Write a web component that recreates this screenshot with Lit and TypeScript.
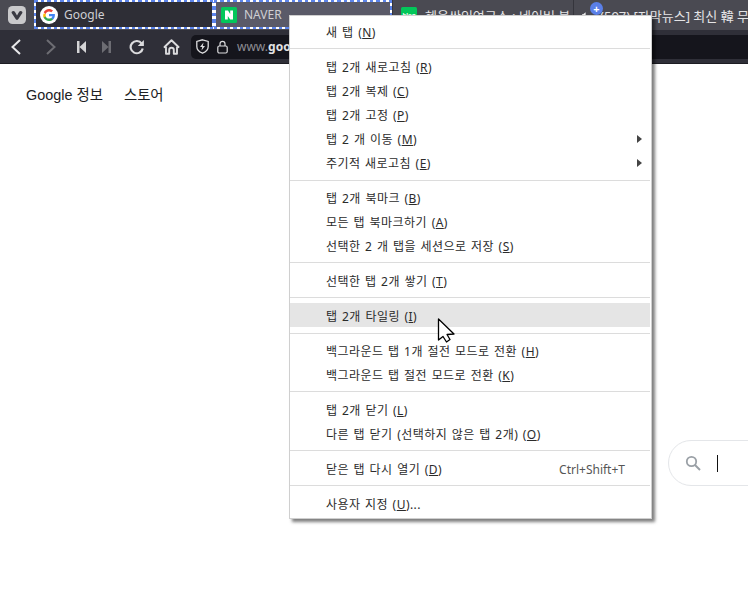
import { LitElement, html, css, svg } from "lit";
import { customElement } from "lit/decorators.js";

type Row = { t: string; k: string; post?: string; arrow?: boolean; hover?: boolean; sc?: string };
type Sep = { sep: "" | "mid" | "before" | "after" };
type Item = Row | Sep;

const ITEMS: Item[] = [
  { t: "새 탭", k: "N" }, { sep: "" },
  { t: "탭 2개 새로고침", k: "R" },
  { t: "탭 2개 복제", k: "C" },
  { t: "탭 2개 고정", k: "P" },
  { t: "탭 2 개 이동", k: "M", arrow: true },
  { t: "주기적 새로고침", k: "E", arrow: true }, { sep: "mid" },
  { t: "탭 2개 북마크", k: "B" },
  { t: "모든 탭 북마크하기", k: "A" },
  { t: "선택한 2 개 탭을 세션으로 저장", k: "S" }, { sep: "" },
  { t: "선택한 탭 2개 쌓기", k: "T" }, { sep: "before" },
  { t: "탭 2개 타일링", k: "I", hover: true }, { sep: "after" },
  { t: "백그라운드 탭 1개 절전 모드로 전환", k: "H" },
  { t: "백그라운드 탭 절전 모드로 전환", k: "K" }, { sep: "" },
  { t: "탭 2개 닫기", k: "L" },
  { t: "다른 탭 닫기 (선택하지 않은 탭 2개)", k: "O" }, { sep: "" },
  { t: "닫은 탭 다시 열기", k: "D", sc: "Ctrl+Shift+T" }, { sep: "" },
  { t: "사용자 지정", k: "U", post: "..." },
];

@customElement("app-root")
export class AppRoot extends LitElement {
  static styles = css`
    :host {
      display: block;
      position: relative;
      width: 748px;
      height: 603px;
      overflow: hidden;
      background: #fff;
      font-family: "Noto Sans", "Noto Sans CJK KR", sans-serif;
    }
    .tabbar {
      height: 30px;
      background: #4a4a52;
      display: flex;
      align-items: stretch;
      overflow: hidden;
    }
    .vlogo {
      width: 34px;
      flex: none;
      display: flex;
      justify-content: center;
      padding: 6px 0 0 0;
      box-sizing: border-box;
    }
    .vlogo svg { display: block; }
    .sel {
      --dash: #5c84ea 0 3.5px, #fff 3.5px 6.5px;
      box-sizing: border-box;
      height: 29px;
      width: 180px;
      flex: none;
      padding: 2px;
      background-color: #fff;
      background-image:
        repeating-linear-gradient(90deg, var(--dash)),
        repeating-linear-gradient(90deg, var(--dash)),
        repeating-linear-gradient(180deg, var(--dash)),
        repeating-linear-gradient(180deg, var(--dash));
      background-size: 100% 2px, 100% 2px, 2px 100%, 2px 100%;
      background-position: 0 0, 0 100%, 0 0, 100% 0;
      background-repeat: no-repeat;
    }
    .tabin {
      height: 100%;
      display: flex;
      align-items: center;
      gap: 6px;
      padding: 0 0 0 4px;
      font-size: 12px;
      color: #cfcfd3;
      box-sizing: border-box;
    }
    .sel.a .tabin { background: #2e2e36; }
    .sel.b .tabin { background: #5a5a68; padding-left: 5px; gap: 7px; }
    .sel.b { width: 178px; }
    .plain {
      flex: none;
      display: flex;
      align-items: center;
      box-sizing: border-box;
      color: #e4e4e6;
      font-size: 13px;
      white-space: nowrap;
      overflow: hidden;
      border-left: 1px solid #35353c;
      position: relative;
    }
    .plain.t3 { width: 181px; padding-left: 8px; gap: 8px; }
    .plain.t4 { width: 176px; padding-left: 8px; }
    .t4 .title { margin-left: 14px; }
    .badge {
      position: absolute;
      left: 16px;
      top: 2px;
      width: 13px;
      height: 13px;
      border-radius: 50%;
      background: #5a7fe8;
      color: #fff;
      font-size: 11px;
      line-height: 13px;
      text-align: center;
      font-weight: 700;
    }
    .toolbar {
      height: 34px;
      background: #2f2f38;
      display: flex;
      align-items: center;
      border-bottom: 1px solid #1c1c22;
      box-sizing: border-box;
    }
    .toolbar svg { display: block; flex: none; }
    .i-back { margin-left: 9px; }
    .i-fwd { margin-left: 21px; }
    .i-rew { margin-left: 19px; }
    .i-ff { margin-left: 16px; }
    .i-reload { margin-left: 18px; }
    .i-home { margin-left: 18px; }
    .i-lock { margin-left: 8px; }
    .addr {
      margin-left: 11px;
      flex: 1;
      height: 24px;
      background: #15151c;
      border-radius: 5px 0 0 5px;
      display: flex;
      align-items: center;
      padding-left: 5px;
      color: #8e8e94;
      font-size: 12px;
      box-sizing: border-box;
    }
    .addr b { color: #e2e2e4; font-weight: 700; }
    .addr .url { margin-left: 9px; }
    .links {
      display: flex;
      gap: 21px;
      padding: 22px 0 0 26px;
      font-family: "Liberation Sans", "Noto Sans CJK KR", sans-serif;
      font-size: 14.4px;
      line-height: 18px;
      color: #202124;
    }
    .search {
      margin: 336px 0 0 668px;
      width: 120px;
      height: 46px;
      box-sizing: border-box;
      border: 1px solid #e4e6e9;
      border-radius: 23px;
      display: flex;
      align-items: center;
      padding-left: 16px;
    }
    .caret { width: 1px; height: 17px; background: #111; margin-left: 16px; }
    .menu {
      position: absolute;
      left: 289px;
      top: 15px;
      width: 363px;
      box-sizing: border-box;
      background: #fff;
      border: 1px solid #cfcfcf;
      box-shadow: 3px 3px 3px rgba(0, 0, 0, 0.5);
      padding: 4px 1px 2px 0;
      font-size: 12px;
      color: #2b2b2b;
    }
    .row {
      box-sizing: border-box;
      height: 24px;
      display: flex;
      align-items: center;
      padding-left: 36px;
      padding-right: 25px;
      position: relative;
      white-space: nowrap;
      letter-spacing: 0.45px;
      word-spacing: 1px;
    }
    .row.hover { background: #e5e5e5; padding-top: 2px; }
    .row u { text-underline-offset: 1px; }
    .sc { margin-left: auto; color: #555; letter-spacing: 0; }
    .arrow {
      position: absolute;
      right: 8px;
      top: 8px;
      width: 0;
      height: 0;
      border-left: 5px solid #444;
      border-top: 4px solid transparent;
      border-bottom: 4px solid transparent;
    }
    .sep { height: 1px; background: #dcdcdc; margin: 4px 0 6px; }
    .sep.mid { margin: 5px 0; }
    .sep.before { margin: 4px 0 5px; }
    .sep.after { margin: 6px 0 5px; }
    .cursor { position: absolute; left: 437px; top: 317px; display: block; }
  `;

  google() {
    return svg`<svg width="18" height="18" viewBox="0 0 18 18">
      <circle cx="9" cy="9" r="9" fill="#fff"/>
      <path d="M14.9 9.100c0-.4 0-.8-.1-1.200H9v2.300h3.400c-.1.8-.6 1.400-1.200 1.900v1.500h2c1.100-1.100 1.700-2.600 1.700-4.500z" fill="#4285f4"/>
      <path d="M9 15c1.600 0 3-.5 4-1.500l-2-1.500c-.5.4-1.200.6-2 .6-1.600 0-2.900-1-3.300-2.400H3.700v1.600C4.700 13.700 6.700 15 9 15z" fill="#34a853"/>
      <path d="M5.700 10.800c-.2-.6-.2-1.200 0-1.800V7.400H3.700c-.7 1.300-.7 2.700 0 4z" fill="#fbbc05"/>
      <path d="M9 5.400c.9 0 1.700.3 2.300.9l1.700-1.700C12 3.600 10.600 3 9 3 6.700 3 4.700 4.300 3.700 6.300l2 1.600C6.100 6.400 7.400 5.400 9 5.400z" fill="#ea4335"/>
    </svg>`;
  }

  menu() {
    return ITEMS.map((it) => {
      if ("sep" in it) return html`<div class="sep ${it.sep}"></div>`;
      return html`<div class="row ${it.hover ? "hover" : ""}">
        <span>${it.t} (<u>${it.k}</u>)${it.post ?? ""}</span>
        ${it.sc ? html`<span class="sc">${it.sc}</span>` : ""}
        ${it.arrow ? html`<span class="arrow"></span>` : ""}
      </div>`;
    });
  }

  render() {
    return html`
      <div class="tabbar">
        <div class="vlogo">
          <svg width="18" height="18" viewBox="0 0 18 18">
            <rect width="18" height="18" rx="4.500" fill="#c9c9cb"/>
            <path d="M3.500 6.800 Q3.500 5 5.300 5 Q6.400 5 7 6 L9 9.500 L11 6 Q11.600 5 12.700 5 Q14.500 5 14.500 6.800 L10.200 13.300 Q9 14.500 7.800 13.300 Z" fill="#3a3a42"/>
          </svg>
        </div>
        <div class="sel a"><div class="tabin">${this.google()}<span>Google</span></div></div>
        <div class="sel b"><div class="tabin">
          <svg width="16" height="16" viewBox="0 0 16 16"><rect width="16" height="16" rx="1.500" fill="#03c75a"/><path d="M4 3.500h3l2.200 3.500V3.500H12v9H9.200L6.800 9v3.500H4z" fill="#fff"/></svg>
          <span>NAVER</span></div></div>
        <div class="plain t3">
          <svg width="16" height="16" viewBox="0 0 16 16"><rect width="16" height="16" rx="1.500" fill="#03c75a"/><text x="8" y="10" font-size="6" font-weight="700" fill="#fff" text-anchor="middle">blog</text></svg>
          <span>혜윰쌍임연구소 : 네이버 블</span>
        </div>
        <div class="plain t4">
          <svg width="9" height="12" viewBox="0 0 9 12"><path d="M0 4.500h2.500L8 0v12L2.500 7.500H0z" fill="#eee"/></svg>
          <span class="badge">+</span>
          <span class="title">(597) [자막뉴스] 최신 韓 무</span>
        </div>
      </div>
      <div class="toolbar">
        <svg class="i-back" width="14" height="18" viewBox="0 0 14 18"><path d="M11 2 L3.500 9 L11 16" fill="none" stroke="#e8e8ea" stroke-width="2"/></svg>
        <svg class="i-fwd" width="14" height="18" viewBox="0 0 14 18"><path d="M3 2 L10.500 9 L3 16" fill="none" stroke="#6d6d73" stroke-width="2"/></svg>
        <svg class="i-rew" width="9" height="12" viewBox="0 0 9 12"><path d="M0 0h2.500v12H0zM2.500 6 L9 0v12z" fill="#d4d4d6"/></svg>
        <svg class="i-ff" width="9" height="12" viewBox="0 0 9 12"><path d="M9 0H6.500v12H9zM6.500 6 L0 0v12z" fill="#6d6d73"/></svg>
        <svg class="i-reload" width="16" height="16" viewBox="0 0 17 16"><path d="M13.500 4.300 A6.500 6.500 0 1 0 14.600 9.500" fill="none" stroke="#dcdcde" stroke-width="2.300"/><path d="M15.800 .5v6.500h-6.500z" fill="#dcdcde"/></svg>
        <svg class="i-home" width="17" height="16" viewBox="0 0 16 16"><path d="M1 8 L8 1.300 L15 8 L13.500 8.500 V14.800 H10.300 V11 A2.300 2.300 0 0 0 5.700 11 V14.800 H2.500 V8.500 Z" fill="none" stroke="#dcdcde" stroke-width="1.900" stroke-linejoin="round"/></svg>
        <div class="addr">
          <svg width="13" height="15" viewBox="0 0 13 15"><path d="M6.500 .8 L12.200 2.500 V7.500 Q12.200 12 6.500 14.200 Q.8 12 .8 7.500 V2.500 Z" fill="#15151c" stroke="#dcdcde" stroke-width="1.300"/><path d="M7.500 3.500 L4 8h2.200L5.500 11.500 9 7H6.800z" fill="#dcdcde"/></svg>
          <svg class="i-lock" width="11" height="14" viewBox="0 0 11 14"><path d="M3 6V3.800a2.500 2.500 0 0 1 5 0V6" fill="none" stroke="#dcdcde" stroke-width="1.200"/><rect x=".8" y="6" width="9.400" height="7" rx="1.500" fill="none" stroke="#dcdcde" stroke-width="1.200"/></svg>
          <span class="url">www.<b>google.com</b></span>
        </div>
      </div>
      <div class="links"><span>Google 정보</span><span>스토어</span></div>
      <div class="search">
        <svg width="16" height="16" viewBox="0 0 16 16"><circle cx="6.500" cy="6.500" r="4.700" fill="none" stroke="#9aa0a6" stroke-width="1.800"/><path d="M10 10 L15 15" stroke="#9aa0a6" stroke-width="2"/></svg>
        <span class="caret"></span>
      </div>
      <div class="menu">${this.menu()}</div>
      <svg class="cursor" width="20" height="27" viewBox="0 0 20 27">
        <path d="M1.500 2 V23 L6 19.500 L9.500 25 L13 22.500 L10 17.500 L17 17 Z" fill="#fff" stroke="#000" stroke-width="1.300" stroke-linejoin="round"/>
      </svg>
    `;
  }
}
